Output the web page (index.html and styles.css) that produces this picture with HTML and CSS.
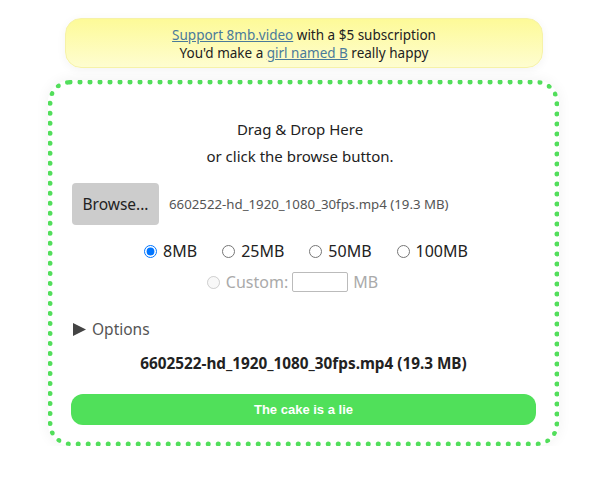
FILE: index.html
```html
<!DOCTYPE html>
<html lang="en">
<head>
    <meta charset="UTF-8">
    <meta name="viewport" content="width=device-width, initial-scale=1.0">
    <title>8mb.video</title>
    <link rel="stylesheet" href="styles.css">
</head>
<body>
    <div class="page">
        <div class="banner">
            <a href="#">Support 8mb.video</a> with a $5 subscription<br>
            You'd make a <a href="#">girl named B</a> really happy
        </div>

        <div class="dropzone">
            <p class="hint">Drag &amp; Drop Here<br>or click the browse button.</p>

            <div class="file-row">
                <button class="browse">Browse...</button>
                <span class="file-name">6602522-hd_1920_1080_30fps.mp4 (19.3 MB)</span>
            </div>

            <div class="sizes">
                <label><input type="radio" name="size" checked> 8MB</label>
                <label><input type="radio" name="size"> 25MB</label>
                <label><input type="radio" name="size"> 50MB</label>
                <label><input type="radio" name="size"> 100MB</label>
            </div>
            <div class="custom">
                <label><input type="radio" name="size" disabled> Custom:</label>
                <input type="text" class="custom-input" disabled>
                <span>MB</span>
            </div>

            <div class="options">
                <svg class="arrow" width="13" height="13" viewBox="0 0 13 13"><path d="M0 0 L13 6.5 L0 13 Z" fill="#444"/></svg>
                Options
            </div>

            <div class="selected">6602522-hd_1920_1080_30fps.mp4 (19.3 MB)</div>

            <button class="go">The cake is a lie</button>
        </div>
    </div>
</body>
</html>
```

FILE: styles.css
```css
body {
    margin: 0;
    background-color: #fff;
    font-family: "Noto Sans", "Open Sans", sans-serif;
    color: #222;
}

.page {
    width: 511px;
    margin: 0 0 0 48px;
    padding-top: 18px;
}

.banner {
    margin: 0 16px 0 17px;
    height: 50px;
    box-sizing: border-box;
    padding-top: 7px;
    border-radius: 16px;
    border: 1px solid #f6f2a8;
    background: linear-gradient(#fdfa98, #fefdd0);
    box-shadow: 0 2px 10px rgba(0,0,0,0.05);
    text-align: center;
    font-size: 13.5px;
    line-height: 18px;
}

.banner a {
    color: #4a7a9a;
}

.dropzone {
    margin-top: 12px;
    height: 366px;
    box-sizing: border-box;
    border: 5px dotted #52de5b;
    border-radius: 22px;
    padding: 0 18px 0 18px;
    box-shadow: 0 0 14px rgba(0,0,0,0.06);
}

.hint {
    margin: 31px 0 0;
    padding-right: 7px;
    text-align: center;
    font-size: 15px;
    line-height: 27px;
}

.file-row {
    display: flex;
    align-items: center;
    margin-top: 13px;
    margin-left: 1px;
}

.browse {
    width: 87px;
    height: 42px;
    border: none;
    border-radius: 4px;
    background-color: #ccc;
    font-family: "Noto Sans", sans-serif;
    font-size: 15.5px;
    color: #222;
}

.file-name {
    margin-left: 10px;
    font-size: 13.25px;
    color: #555;
}

.sizes {
    display: flex;
    justify-content: center;
    gap: 25px;
    margin-top: 15px;
    padding-left: 5px;
    font-size: 16px;
}

.sizes label, .custom label {
    display: flex;
    align-items: center;
}

input[type=radio] {
    margin: 0 6px 0 0;
    width: 13px;
    height: 13px;
}

.custom {
    display: flex;
    justify-content: center;
    align-items: center;
    margin-top: 9px;
    padding-right: 22px;
    font-size: 16px;
    color: #aaa;
}

.custom-input {
    width: 56px;
    height: 20px;
    box-sizing: border-box;
    margin: 0 5px 0 4px;
    border: 1px solid #bbb;
    border-radius: 2px;
    background: #fff;
}

.options {
    display: flex;
    align-items: center;
    gap: 6px;
    margin-top: 25px;
    margin-left: 2px;
    font-size: 15.5px;
    color: #555;
}

.selected {
    margin-top: 13px;
    text-align: center;
    font-weight: bold;
    font-size: 15.3px;
}

.go {
    display: block;
    width: 100%;
    height: 31px;
    margin-top: 21px;
    border: none;
    border-radius: 12px;
    background-color: #50e05a;
    color: #fff;
    font-family: "Liberation Sans", Arial, sans-serif;
    font-weight: bold;
    font-size: 13px;
}
```
